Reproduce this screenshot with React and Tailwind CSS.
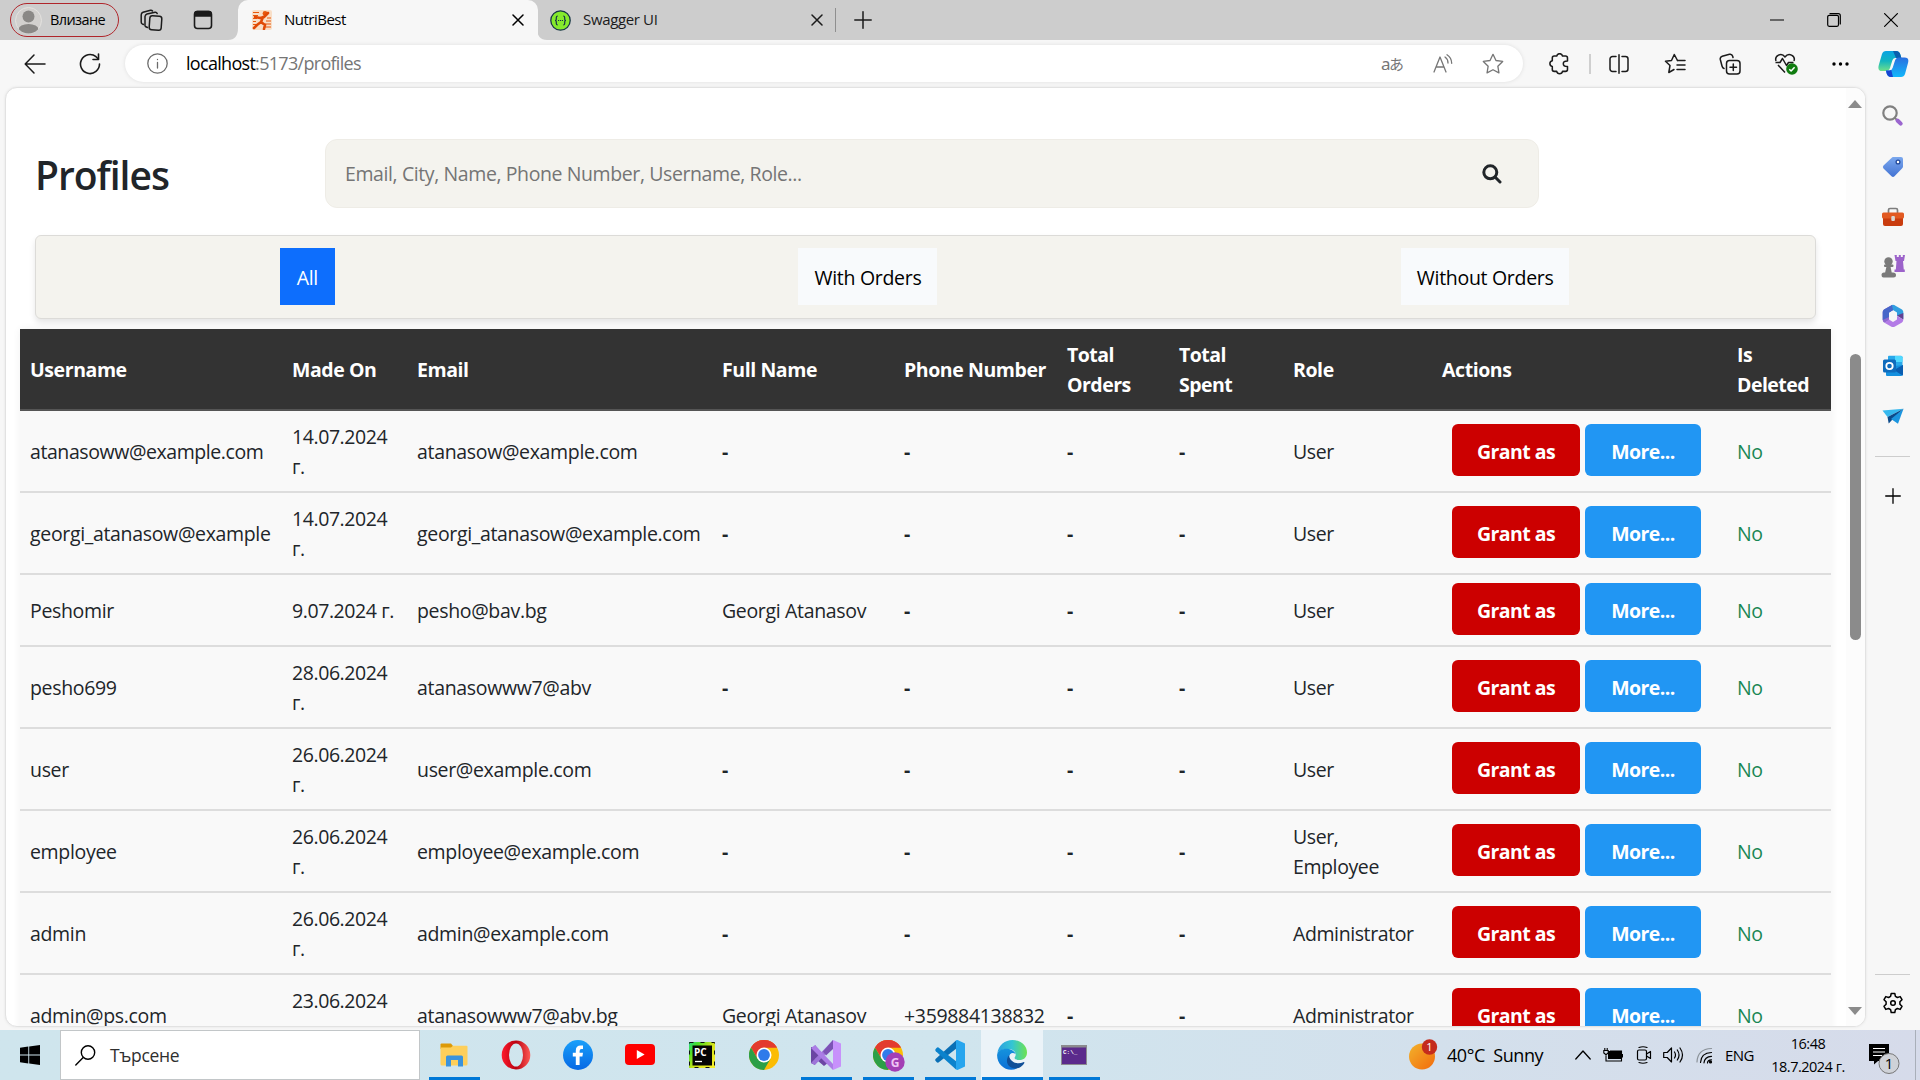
import React from 'react';

const S = ({ size = 24, w, h, vb = '0 0 24 24', sw = 1.5, children, className = '' }) => (
  <svg
    width={w || size}
    height={h || size}
    viewBox={vb}
    fill="none"
    stroke="currentColor"
    strokeWidth={sw}
    strokeLinecap="round"
    strokeLinejoin="round"
    className={`shrink-0 ${className}`}
  >
    {children}
  </svg>
);

const Slot = ({ className, children }) => (
  <div className={`flex shrink-0 items-center justify-center ${className}`}>{children}</div>
);

const CloseX = () => (
  <S size={12} vb="0 0 12 12" sw={1.5}>
    <path d="M1 1l10 10M11 1L1 11" />
  </S>
);

const STAR = 'M10 1.2l2.7 5.6 6.1.9-4.4 4.3 1 6.1-5.4-2.9-5.4 2.9 1-6.1L1.2 7.700l6.100-.9z';

function TabBar() {
  return (
    <div className="flex h-10 shrink-0 items-stretch bg-[#cdcdcd] text-[15px] tracking-[-0.35px] text-[#1b1b1b]">
      <div className="my-[3px] ml-[10px] flex w-[109px] shrink-0 items-center rounded-full border-[1.5px] border-[#b0262b] pl-1">
        <svg width="27" height="27" viewBox="0 0 27 27" className="shrink-0">
          <defs>
            <clipPath id="avatarClip"><circle cx="13.500" cy="13.500" r="13" /></clipPath>
          </defs>
          <circle cx="13.500" cy="13.500" r="13" fill="#d2d0ce" stroke="#e4e2df" />
          <g clipPath="url(#avatarClip)" fill="#8a8886">
            <circle cx="13.500" cy="9.500" r="6" />
            <ellipse cx="13.500" cy="22.500" rx="10" ry="5.500" />
          </g>
        </svg>
        <span className="ml-[8px] text-[14.500px] tracking-[-0.6px] text-black">Влизане</span>
      </div>
      <Slot className="ml-[20px] w-6">
        <S size={23} vb="0 0 23 23" sw={1.500}>
          <rect x="9.500" y="7" width="12" height="14" rx="2.500" transform="rotate(4 15 14)" />
          <path d="M7.500 18.500L5.800 17.800A2 2 0 0 1 5 15.500V7.500A3 3 0 0 1 7 5L15 3.200A2 2 0 0 1 17.200 4.500" />
          <path d="M3.500 15.500L2.200 14.800A2 2 0 0 1 1.200 13V6A3 3 0 0 1 3 3.200L10.500 1.200A2 2 0 0 1 12.500 2" />
        </S>
      </Slot>
      <Slot className="ml-[28px] w-6">
        <S size={20} vb="0 0 20 20" sw={1.600}>
          <rect x="1.500" y="1.500" width="17" height="17" rx="3" />
          <path d="M2 3.500q0-2 2-2h12q2 0 2 2V6H2z" fill="currentColor" />
        </S>
      </Slot>
      <svg width="12" height="40" viewBox="0 0 12 40" className="ml-[13px] shrink-0">
        <path d="M0 40Q10 40 10 28V10L12 8V40z" fill="#f7f7f7" />
      </svg>
      <div className="-ml-[2px] flex w-[300px] shrink-0 items-center rounded-t-[10px] bg-[#f7f7f7] text-black">
        <svg width="20" height="20" viewBox="0 0 20 20" className="ml-[14px] shrink-0">
          <rect width="20" height="20" rx="2" fill="#f8dfc8" />
          <g stroke="#e8590c" strokeWidth="1.100">
            <path d="M1 2.500h6M1 5.500h5M1 8.500h4M1 11.500h3M1 14.500h5M13 14h6M14 11h5M15 8h4M12 17h7" />
          </g>
          <circle cx="13" cy="3.500" r="2.400" fill="#e8590c" />
          <path d="M3 7l5 1 4-1 4-4M11 7l-2 5 4 3-1 4M9 12l-4 3-3 3" stroke="#e04a06" strokeWidth="2.600" fill="none" strokeLinecap="round" />
        </svg>
        <span className="-mt-px ml-[12px] tracking-[-0.5px]">NutriBest</span>
        <div className="ml-auto mr-[14px]"><CloseX /></div>
      </div>
      <svg width="10" height="40" viewBox="0 0 10 40" className="-ml-px shrink-0">
        <path d="M0 28V40H10Q0 40 0 28z" fill="#f7f7f7" />
      </svg>
      <div className="flex w-[288px] shrink-0 items-center pl-[3px]">
        <svg width="21" height="21" viewBox="0 0 21 21" className="shrink-0">
          <circle cx="10.500" cy="10.500" r="9.700" fill="#85ea2d" stroke="#173647" strokeWidth="1.300" />
          <g fill="none" stroke="#173647" strokeWidth="1.200">
            <path d="M7.800 6Q6.300 6 6.300 7.500V9.200Q6.300 10.500 5 10.500Q6.300 10.500 6.300 11.800V13.500Q6.300 15 7.800 15" />
            <path d="M13.200 6Q14.700 6 14.700 7.500V9.200Q14.700 10.500 16 10.500Q14.700 10.500 14.700 11.800V13.500Q14.700 15 13.200 15" />
            <path d="M8 10.500h5" strokeDasharray="1.200 .8" />
          </g>
        </svg>
        <span className="-mt-px ml-[12px]">Swagger UI</span>
        <div className="ml-auto mr-[12px]"><CloseX /></div>
      </div>
      <div className="my-2 w-px shrink-0 bg-[#8f8f8f]" />
      <Slot className="ml-[17px] w-5">
        <S size={18} vb="0 0 18 18"><path d="M9 .8v16.400M.8 9h16.400" /></S>
      </Slot>
      <div className="mr-[1px] ml-auto flex text-black">
        <Slot className="w-[57px]"><S size={14} vb="0 0 14 14" sw={1.200}><path d="M.5 7h13" /></S></Slot>
        <Slot className="w-[57px]">
          <S size={14} vb="0 0 14 14" sw={1.200}>
            <rect x=".7" y="2.300" width="10.800" height="11" rx="1.500" />
            <path d="M3 .7h8.300a2 2 0 0 1 2 2V11" />
          </S>
        </Slot>
        <Slot className="w-[57px]"><S size={14} vb="0 0 14 14" sw={1.200}><path d="M.6.6l12.800 12.800M13.400.6L.6 13.400" /></S></Slot>
      </div>
    </div>
  );
}

function Toolbar() {
  return (
    <div className="flex h-[47px] shrink-0 items-center bg-[#f7f7f7] text-[#1b1b1b]">
      <Slot className="ml-[23px] w-6">
        <S size={22} vb="0 0 22 22" sw={1.500}><path d="M21 11H1.500M10 2L1.200 11l8.800 9" /></S>
      </Slot>
      <Slot className="ml-[31px] w-6">
        <S size={22} vb="0 0 22 22" sw={1.600}>
          <path d="M20.500 11a9.500 9.500 0 1 1-3.500-7.300L19.300 6" />
          <path d="M19.500 1v5.500h-5.500" />
        </S>
      </Slot>
      <div className="ml-[23px] flex h-[37px] w-[1398px] shrink-0 items-center rounded-full bg-white shadow-[0_0_4px_rgba(0,0,0,0.1)]">
        <S size={21} vb="0 0 21 21" sw={1.300} className="ml-[22px] text-[#6b6b6b]">
          <circle cx="10.500" cy="10.500" r="9.700" />
          <path d="M10.500 9.500v5.500M10.500 6.300v.2" />
        </S>
        <span className="-mt-px ml-[18px] text-[18px] tracking-[-0.7px] text-[#757575]">
          <span className="text-black">localhost</span>:5173/profiles
        </span>
        <span className="ml-auto w-[24px] font-['Noto_Sans','Noto_Sans_CJK_JP',sans-serif] text-[17px] leading-none tracking-[-1.5px] whitespace-nowrap text-[#767676]">
          a<span className="text-[15px]">あ</span>
        </span>
        <Slot className="ml-[28px] w-5 text-[#767676]">
          <S size={20} vb="0 0 20 20" sw={1.300}>
            <path d="M1 18L7 3l6 15M3 13h8" />
            <path d="M12 3q3 2 3 6M14 .8q4.500 2.800 4.700 8.500" />
          </S>
        </Slot>
        <Slot className="ml-[30px] mr-[20px] w-5 text-[#767676]">
          <S size={22} vb="0 0 20 20" sw={1.200}><path d={STAR} /></S>
        </Slot>
      </div>
      <Slot className="ml-[26px] w-[22px]">
        <S size={22} vb="1 1 20 20" sw={1.400}>
          <path d="M4 5.500q0-1.700 1.700-1.700H8A2.700 2.700 0 0 1 13.300 3.800H16q1.800 0 1.800 1.700V8.300Q14 8.200 14 10.700T17.800 13.300V16q0 1.700-1.800 1.700h-2.700A2.700 2.700 0 0 1 8 17.700H5.700Q4 17.700 4 16V13.300A2.700 2.700 0 0 1 4 8z" />
        </S>
      </Slot>
      <div className="ml-[18px] h-5 w-[2px] shrink-0 bg-[#cfcfcf]" />
      <Slot className="ml-[17px] w-[22px]">
        <S size={20} vb="0 0 20 20" sw={1.500}>
          <path d="M7 2.500H3.500a2.500 2.500 0 0 0-2.500 2.500v10a2.500 2.500 0 0 0 2.500 2.500H7M13 2.500h3.500A2.500 2.500 0 0 1 19 5v10a2.500 2.500 0 0 1-2.500 2.500H13M10 .8v18.400" />
        </S>
      </Slot>
      <Slot className="ml-[34px] w-[22px]">
        <S size={22} vb="0 0 22 22" sw={1.500}>
          <path d="M13.500 7.500L10.300 1.500 7.500 7.500 1.500 8.300l4.500 4.200-1.200 7 5.200-3" />
          <path d="M13.500 7.500H21M13 12h8M13 16.500h8" />
        </S>
      </Slot>
      <Slot className="ml-[33px] w-[22px]">
        <S size={22} vb="0 0 22 22" sw={1.500}>
          <rect x="7.500" y="7.500" width="13.500" height="13.500" rx="3" />
          <path d="M14.300 11v6.500M11 14.300h6.500M5 15.500Q3.500 15 3 13L1.300 6.500Q.8 4 3.200 3.300L10.500 1.300Q13 .8 13.700 3.300L14 4.500" />
        </S>
      </Slot>
      <Slot className="ml-[33px] w-6">
        <svg width="24" height="22" viewBox="0 0 24 22" fill="none" stroke="#1b1b1b" strokeWidth="1.500" strokeLinejoin="round">
          <path d="M2 8C.2 2.500 7.500-1 11 4c3.500-5 10.800-1.500 9 4M4 12l7 7.500M1.500 9.500H6l2.500-4 4 7 2-3h5" />
          <circle cx="18" cy="16" r="5.800" fill="#107c10" stroke="none" />
          <path d="M15.300 16.200l1.800 1.800 3.500-3.800" stroke="#fff" />
        </svg>
      </Slot>
      <Slot className="ml-[31px] w-[22px]">
        <svg width="17" height="4" viewBox="0 0 17 4"><circle cx="2" cy="2" r="1.700" /><circle cx="8.500" cy="2" r="1.700" /><circle cx="15" cy="2" r="1.700" /></svg>
      </Slot>
      <Slot className="ml-[26px] w-8">
        <svg width="31" height="28" viewBox="0 0 31 28">
          <defs>
            <linearGradient id="cpA" x1="0" y1="0" x2="0" y2="1"><stop offset="0" stopColor="#0aa3e3" /><stop offset=".5" stopColor="#12b5c0" /><stop offset="1" stopColor="#6fe08a" /></linearGradient>
            <linearGradient id="cpB" x1="0" y1="0" x2="0" y2="1"><stop offset="0" stopColor="#2a6fe0" /><stop offset="1" stopColor="#12b8fb" /></linearGradient>
          </defs>
          <path d="M8 1h10q3.500 0 4.500 4l.8 3H17q-2 0-2.700 2.500L12 18q-.8 3-4 3H4Q-.8 21 .8 15L4 4Q5 1 8 1z" fill="url(#cpA)" />
          <path d="M15 1h3q3.500 0 4.500 4l.8 3H18z" fill="#0b5fae" />
          <path d="M23 27H13q-3.500 0-4.500-4L8 20.500h3.500q2.500 0 3.200-2.700L17 10.500Q18 7.500 21 7.500h5.500Q31.500 7.500 30 13l-3 11q-1 3-4 3z" fill="url(#cpB)" />
          <path d="M15 27h-2q-3.500 0-4.500-4L8 20.500h3.500q1 0 1.700-.7z" fill="#1746d1" />
        </svg>
      </Slot>
    </div>
  );
}

const rows = [
  ['atanasoww@example.com', '14.07.2024 г.', 'atanasow@example.com', '-', '-', 'User'],
  ['georgi_atanasow@example', '14.07.2024 г.', 'georgi_atanasow@example.com', '-', '-', 'User'],
  ['Peshomir', '9.07.2024 г.', 'pesho@bav.bg', 'Georgi Atanasov', '-', 'User'],
  ['pesho699', '28.06.2024 г.', 'atanasowww7@abv', '-', '-', 'User'],
  ['user', '26.06.2024 г.', 'user@example.com', '-', '-', 'User'],
  ['employee', '26.06.2024 г.', 'employee@example.com', '-', '-', 'User, Employee'],
  ['admin', '26.06.2024 г.', 'admin@example.com', '-', '-', 'Administrator'],
  ['admin@ps.com', '23.06.2024 г.', 'atanasowww7@abv.bg', 'Georgi Atanasov', '+359884138832', 'Administrator'],
];

const heads = ['Username', 'Made On', 'Email', 'Full Name', 'Phone Number', 'Total Orders', 'Total Spent', 'Role', 'Actions', 'Is Deleted'];

const cell = 'pt-[12px] pb-[10px] pl-[10px] align-middle whitespace-nowrap';

const Val = ({ v }) => (v === '-' ? <span className="font-bold">-</span> : v);

function ProfilesTable() {
  return (
    <table className="mt-[10px] ml-[14px] w-[1811px] table-fixed border-collapse text-[19.500px] leading-[30px] tracking-[-0.33px] text-[#212529] shadow-[0_0_8px_rgba(0,0,0,0.06)]">
      <colgroup>
        <col className="w-[262px]" />
        <col className="w-[125px]" />
        <col className="w-[305px]" />
        <col className="w-[182px]" />
        <col className="w-[163px]" />
        <col className="w-[112px]" />
        <col className="w-[114px]" />
        <col className="w-[149px]" />
        <col className="w-[295px]" />
        <col className="w-[104px]" />
      </colgroup>
      <thead>
        <tr className="h-[81px] border-b-2 border-[#555] bg-[#333] text-left text-white">
          {heads.map((h) => (
            <th key={h} className={`pt-[11px] pb-[9px] pl-[10px] align-middle font-bold ${/^(Total|Is)/.test(h) ? 'pr-8 tracking-[-0.52px]' : 'tracking-[-0.42px] whitespace-nowrap'}`}>{h}</th>
          ))}
        </tr>
      </thead>
      <tbody>
        {rows.map((r, i) => (
          <tr key={i} className={`border-b-2 border-[#ddd] bg-[#f9f9f9] ${i === 2 ? 'h-[72px]' : 'h-[82px]'}`}>
            <td className={`${cell} ${i === 0 ? 'tracking-[-0.42px]' : ''}`}>{r[0]}</td>
            <td className={`pt-[2px] pb-0 pl-[10px] align-middle tracking-[-0.42px] ${i === 2 ? 'whitespace-nowrap' : 'pr-4'}`}>{r[1]}</td>
            <td className={cell}>{r[2]}</td>
            <td className={cell}><Val v={r[3]} /></td>
            <td className={cell}><Val v={r[4]} /></td>
            <td className={cell}><Val v="-" /></td>
            <td className={cell}><Val v="-" /></td>
            <td className="pt-[2px] pr-8 pb-0 pl-[10px] align-middle tracking-[-0.4px]">{r[5]}</td>
            <td className="py-0 pl-[20px] align-middle">
              <div className="-mt-[3px] flex gap-[5px] font-bold tracking-[-0.55px] text-white">
                <button className="h-[52px] w-[128px] rounded-[6px] bg-[#c00] pt-[5px]">Grant as</button>
                <button className="h-[52px] w-[116px] rounded-[6px] bg-[#2196f3] pt-[5px]">More...</button>
              </div>
            </td>
            <td className={`${cell} text-[#198754]`}>No</td>
          </tr>
        ))}
      </tbody>
    </table>
  );
}

function Page() {
  return (
    <div className="ml-[5px] flex h-[940px] w-[1861px] shrink-0 overflow-hidden rounded-[12px] border border-[#e2e2e2] bg-white shadow-[0_0_3px_rgba(0,0,0,0.08)]">
      <div className="w-[1840px] shrink-0">
        <div className="flex pt-[51px] pl-[29px]">
          <h1 className="mt-[8px] w-[290px] text-[39px] leading-[56px] font-semibold tracking-[-1px] text-[#212529]">Profiles</h1>
          <div className="flex h-[69px] w-[1214px] items-center rounded-[12px] border border-[#eeece6] bg-[#f4f3ee] pl-[19px]">
            <span className="text-[19.500px] tracking-[-0.4px] text-[#757575]">Email, City, Name, Phone Number, Username, Role...</span>
            <S size={20} vb="0 0 20 20" sw={3} className="mr-[36px] ml-auto text-[#212529]">
              <circle cx="8.300" cy="8.300" r="6.500" />
              <path d="M13.300 13.300l4.700 4.700" />
            </S>
          </div>
        </div>
        <div className="mt-[27px] ml-[29px] flex h-[84px] w-[1781px] items-start justify-around rounded-[6px] border border-[#dcdbd8] bg-[#f4f3ee] pt-3 pr-[14px] pl-[12px] text-[19.500px] tracking-[-0.3px] text-black shadow-[0_4px_6px_rgba(0,0,0,0.1)]">
          <button className="h-[57px] w-[55px] bg-[#0d6efd] pt-[3px] text-white">All</button>
          <button className="h-[57px] w-[139px] bg-[#f8fafc] pt-[3px] whitespace-nowrap">With Orders</button>
          <button className="h-[57px] w-[168px] bg-[#f8fafc] pt-[3px] whitespace-nowrap">Without Orders</button>
        </div>
        <ProfilesTable />
      </div>
      <div className="flex w-[19px] shrink-0 flex-col items-center bg-[#fcfcfc] pr-[1px]">
        <svg width="14" height="8" viewBox="0 0 14 8" className="mt-[12px] shrink-0"><path d="M0 8L7 0l7 8z" fill="#8b8b8b" /></svg>
        <div className="mt-[246px] h-[286px] w-[11px] shrink-0 rounded-full bg-[#8b8b8b]" />
        <svg width="14" height="8" viewBox="0 0 14 8" className="mt-auto mb-[11px] shrink-0"><path d="M0 0h14L7 8z" fill="#8b8b8b" /></svg>
      </div>
    </div>
  );
}

function Sidebar() {
  return (
    <div className="flex flex-1 flex-col items-center pt-[3px] pr-[1px]">
      <Slot className="h-[51px]">
        <svg width="22" height="22" viewBox="0 0 22 22" fill="none" strokeLinecap="round">
          <circle cx="8" cy="8" r="6.700" stroke="#808080" strokeWidth="2.200" />
          <path d="M12.800 12.800l2.700 2.700" stroke="#808080" strokeWidth="1.800" />
          <path d="M15.500 15.500l3.200 3.200" stroke="#9b66cf" strokeWidth="4" />
        </svg>
      </Slot>
      <Slot className="h-[51px]">
        <svg width="22" height="22" viewBox="0 0 22 22">
          <defs><linearGradient id="tagG" x1="0" y1="0" x2="0" y2="1"><stop offset="0" stopColor="#7ba8ee" /><stop offset="1" stopColor="#4373d3" /></linearGradient></defs>
          <path d="M11 1h8q2 0 2 2v7.500q0 1-1 2l-7.500 7.800q-1.500 1.400-3 0l-8-7.700q-1.300-1.500 0-3L9.500 2q.8-1 1.500-1z" fill="url(#tagG)" />
          <circle cx="16" cy="6" r="1.900" fill="#fff" stroke="#234a9b" strokeWidth="1.300" />
        </svg>
      </Slot>
      <Slot className="h-[50px]">
        <svg width="24" height="20" viewBox="0 0 24 20">
          <path d="M7.500 6V3q0-1.500 1.500-1.500h6q1.500 0 1.500 1.500v3" fill="none" stroke="#7d7d7d" strokeWidth="1.700" />
          <path d="M2 11h20v6q0 2-2 2H4q-2 0-2-2z" fill="#c93c0e" />
          <rect x="1" y="5.500" width="22" height="6" rx="1.500" fill="#e25a22" />
          <rect x="10.300" y="9" width="3.600" height="5" rx="1" fill="#d9d6d3" />
        </svg>
      </Slot>
      <Slot className="h-[48px]">
        <svg width="24" height="24" viewBox="0 0 24 24">
          <g fill="#9c63ca"><path d="M13.500 1h2.300v2h2V1h2v2h2V1H24l-1 6h-8.500zM15.500 7h6.500l.8 9h-8zM13.500 15.500h10.300v2.500H13.500z" /></g>
          <g fill="#7a7a7a"><circle cx="7.500" cy="7.500" r="4.200" /><rect x="3" y="10.500" width="9.500" height="2.500" rx="1" /><path d="M5.500 12.500h4l1.300 6.500H4zM3 18.500h9q3 0 3 2.500t-2.500 2.500h-10Q.5 23.500.5 21T3 18.500z" /></g>
        </svg>
      </Slot>
      <Slot className="h-[51px]">
        <svg width="22" height="24" viewBox="0 0 22 24">
          <path d="M10 1L2 5.500Q.7 6.500.7 8v8q0 2 1.800 2.700L7 16.500V8.500L13 5V2q-1.300-1.500-3-1z" fill="#8f68cf" />
          <path d="M10 1q1.500-.5 3 .5L20 5.500q1.300 1 1.300 2.500v7L15 11.500V8.500l-4-2.500-4 2.500V4z" fill="#319fe0" />
          <path d="M10 1L2 5.500Q.7 6.500.7 8v8l6.300-3V8.500L11 6z" fill="#4766c9" />
          <path d="M2.500 18.700L9 22.500q2 1 4 0l7-4q1.300-1 1.300-3L15 12v3.500L11 18l-4-2.500z" fill="#b37be6" />
          <path d="M15 11.500l6.300 4V9z" fill="#634191" />
        </svg>
      </Slot>
      <Slot className="h-[50px]">
        <svg width="22" height="22" viewBox="0 0 22 22">
          <path d="M6 1.500Q6 .8 7 .8h12q1.500 0 1.500 1.500V11H6z" fill="#28a8ea" />
          <path d="M13 1h6.500q1 0 1 1.500V7H13z" fill="#50d9ff" />
          <path d="M4 20V12l17-2v9q0 2-2 2H5q-1 0-1-1z" fill="#1490df" />
          <path d="M21 10v9q0 1-.5 1.500L12 15z" fill="#0a5db0" />
          <rect x="1" y="4.500" width="13" height="13" rx="1.500" fill="#0f6cbd" />
          <circle cx="7.500" cy="11" r="3.200" fill="none" stroke="#fff" strokeWidth="1.800" />
        </svg>
      </Slot>
      <Slot className="h-[50px]">
        <svg width="22" height="17" viewBox="0 0 22 17">
          <path d="M.5 2.500L21.500.7 5.500 9z" fill="#35b8ee" />
          <path d="M21.500.7L5.500 9l1.200 6.500L10 12z" fill="#0c4a8a" />
          <path d="M21.500.7L9 11l7 4.800z" fill="#1b95df" />
        </svg>
      </Slot>
      <div className="mt-[15px] h-px w-[35px] bg-[#cdcdcd]" />
      <Slot className="mt-[31px] h-4"><S size={16} vb="0 0 16 16" sw={1.300}><path d="M8 .7v14.600M.7 8h14.600" /></S></Slot>
      <div className="mt-auto h-px w-[35px] bg-[#cdcdcd]" />
      <Slot className="mt-[17px] mb-[16px]">
        <S size={22} vb="0 0 22 22" sw={1.500}>
          <path d="M9.200 1.500h3.600l.6 2.800 2 1.200 2.800-.9 1.800 3.100-2.100 2v2.600l2.100 2-1.800 3.100-2.800-.9-2 1.200-.6 2.800H9.200l-.6-2.800-2-1.200-2.800.9L2 14.300l2.100-2V9.700L2 7.700l1.800-3.100 2.800.9 2-1.200z" />
          <circle cx="11" cy="11" r="2.300" />
        </S>
      </Slot>
    </div>
  );
}

const Chrome = ({ badge }) => (
  <svg width="32" height="34" viewBox="0 0 32 34">
    <circle cx="15" cy="17" r="15" fill="#fbbc05" />
    <path d="M15 17L2 9.500A15 15 0 0 1 28 9.500H15z" fill="#e33b2e" />
    <path d="M15 9.500h13A15 15 0 0 0 2 9.500l6.500 11z" fill="#e33b2e" />
    <path d="M2 9.500A15 15 0 0 0 15 32l6.500-11.300-13 0z" fill="#2c9f47" />
    <circle cx="15" cy="17" r="7.500" fill="#fff" />
    <circle cx="15" cy="17" r="5.900" fill="#2f7bea" />
    {badge && (
      <>
        <circle cx="22" cy="24" r="9.700" fill="#a33fb5" />
        <text x="22" y="28.500" textAnchor="middle" fontSize="12" fontWeight="700" fill="#efc5f5" fontFamily="Open Sans">G</text>
      </>
    )}
  </svg>
);

const taskIcons = [
  {
    bar: 'w-[51px]',
    icon: (
      <svg width="28" height="24" viewBox="0 0 28 24">
        <path d="M.5 1.500Q.5.5 1.500.5H11l2 2.500v3H.5z" fill="#dd9a08" />
        <path d="M.5 4.500H11l2-1.700h13.500q1 0 1 1V21q0 1.500-1.500 1.500H2Q.5 22.500.5 21z" fill="#fdcf5b" />
        <path d="M6 23.500V14q0-1.500 1.500-1.500h14q1.500 0 1.500 1.500v9.500h-5V17h-7v6.500z" fill="#3a93dc" />
      </svg>
    ),
  },
  {
    icon: (
      <svg width="30" height="30" viewBox="0 0 30 30">
        <defs><linearGradient id="opG" x1="0" y1="0" x2="1" y2="0"><stop offset="0" stopColor="#ff1b2d" /><stop offset=".5" stopColor="#b8000f" /><stop offset="1" stopColor="#ff5a56" /></linearGradient></defs>
        <path fillRule="evenodd" d="M15 .5a14.300 14.500 0 1 0 0 29a14.300 14.500 0 1 0 0-29zM15 3.500a7 11.500 0 1 1 0 23a7 11.500 0 1 1 0-23z" fill="url(#opG)" />
      </svg>
    ),
  },
  {
    icon: (
      <svg width="30" height="30" viewBox="0 0 30 30">
        <defs><linearGradient id="fbG" x1="0" y1="0" x2="0" y2="1"><stop offset="0" stopColor="#19a0fa" /><stop offset="1" stopColor="#0668e4" /></linearGradient></defs>
        <circle cx="15" cy="15" r="15" fill="url(#fbG)" />
        <path d="M12.800 25V16.500h-3v-3.700h3V10.500q0-5 5-5h2.200v3.600h-1.500q-1.900 0-1.900 1.900v1.800h3.400l-.6 3.700h-2.800V25z" fill="#fff" />
      </svg>
    ),
  },
  {
    icon: (
      <svg width="30" height="21" viewBox="0 0 30 21">
        <rect width="30" height="21" rx="4" fill="#f00" />
        <path d="M11.800 6v9l7.800-4.500z" fill="#fff" />
      </svg>
    ),
  },
  {
    icon: (
      <svg width="26" height="26" viewBox="0 0 26 26">
        <defs><linearGradient id="pcG" x1="0" y1="0" x2="1" y2=".8"><stop offset="0" stopColor="#21d789" /><stop offset=".25" stopColor="#4ee023" /><stop offset=".6" stopColor="#d3e51c" /><stop offset="1" stopColor="#f4ee2a" /></linearGradient></defs>
        <rect width="26" height="26" fill="url(#pcG)" />
        <rect x=".5" y=".5" width="25" height="25" fill="none" stroke="#111" strokeDasharray="4 7" />
        <rect x="3.500" y="3.500" width="19.500" height="20" fill="#050505" />
        <text x="5" y="13.500" fontSize="10" fontWeight="700" fill="#fff" fontFamily="Open Sans">PC</text>
        <path d="M6 19.500h7" stroke="#fff" strokeWidth="1.300" />
      </svg>
    ),
  },
  { icon: <div className="ml-[2px]"><Chrome /></div> },
  {
    bar: 'w-[51px]',
    icon: (
      <svg width="30" height="30" viewBox="0 0 30 30">
        <path d="M0 7l4-2 14 17-5 4L4 18.500v-11zM0 7v16l4 2V5z" fill="#6b46a3" />
        <path d="M0 23l4 2L22 6V0L12.500 10z" fill="#9d74d8" />
        <path d="M4 5l18 19v6L0 8z" fill="#ab7de6" />
        <path d="M12 11.500L22 0v9l-7 6.500z" fill="#7c53b5" />
        <path d="M22 0l8 3.500v23L22 30z" fill="#c791fb" />
      </svg>
    ),
  },
  { bar: 'w-[51px]', icon: <div className="ml-[2px]"><Chrome badge /></div> },
  {
    bar: 'w-[51px]',
    icon: (
      <svg width="30" height="30" viewBox="0 0 30 30">
        <path d="M22 8L3.500 22.500Q2.500 23 1.500 22L.5 20.800q-.7-1 .3-2L21 .5z" fill="#0a6fb5" />
        <path d="M22 22L3.500 7.500Q2.500 7 1.500 8L.5 9.200q-.7 1 .3 2L21 29.500z" fill="#0b82cc" />
        <path d="M21 .3L22.500 0 30 3.500v23L22.500 30 21 29.500z" fill="#26a5ee" />
      </svg>
    ),
  },
  {
    bar: 'w-[61px]',
    active: true,
    icon: (
      <svg width="30" height="30" viewBox="0 0 30 30">
        <defs>
          <linearGradient id="edA" x1="0" y1="0" x2="1" y2="0"><stop offset="0" stopColor="#2a9fe0" /><stop offset=".5" stopColor="#34c5d4" /><stop offset="1" stopColor="#6de34f" /></linearGradient>
          <linearGradient id="edB" x1="0" y1="0" x2="0" y2="1"><stop offset="0" stopColor="#1593dd" /><stop offset="1" stopColor="#0b6fd6" /></linearGradient>
        </defs>
        <path d="M.3 13.500C1.500 5 8 0 15.500 0 24 0 30 6 30 12.500c0 5-3.500 7.500-7.500 7.500-3 0-5-1-5-2 0-.8 1.200-1.500 1.200-3.500 0-3-3-5.500-7.200-5.500C6 9 1.500 10.500.3 13.500z" fill="url(#edA)" />
        <path d="M.1 15C.5 10.500 5.500 8.500 10.500 8.800c4.500.3 7.500 3 8 5.200-3-2.500-6.500-.5-6.500 4 0 5 4 9.500 8 10.500C10 33 0 25 .1 15z" fill="url(#edB)" />
        <path d="M12 15.500c-4 4-2.500 13 7 13 3.500 0 7-3 8.300-5.500.4-.9-.3-1.200-1-.8-6 2.800-13.300 0-14.300-6.700z" fill="#104f98" />
      </svg>
    ),
  },
  {
    bar: 'w-[51px]',
    icon: (
      <svg width="26" height="20" viewBox="0 0 26 20">
        <rect width="26" height="20" fill="#8b8b8f" />
        <rect x="1" y="2.500" width="24" height="16.500" fill="#5b2a8c" />
        <text x="2" y="9" fontSize="6" fontWeight="700" fill="#fff" fontFamily="Liberation Mono">C:\_</text>
      </svg>
    ),
  },
];

function Taskbar() {
  return (
    <div className="flex h-[50px] shrink-0 bg-linear-to-r from-[#cfe5ed] via-[#d0e5ee] to-[#d6dbea] text-black">
      <Slot className="w-[60px]">
        <svg width="20" height="20" viewBox="0 0 20 20"><path d="M0 2.800L8.300 1.600v8H0zM9.200 1.500L20 0v9.600H9.200zM0 10.500h8.300v8L0 17.300zM9.200 10.500H20V20L9.200 18.500z" /></svg>
      </Slot>
      <div className="flex w-[360px] shrink-0 items-center border border-[#c2c6c8] bg-white pl-[14px]">
        <S size={21} vb="0 0 21 21" sw={1.400}><circle cx="13" cy="7.500" r="6.700" /><path d="M8.200 12.500L.8 20" /></S>
        <span className="ml-[14px] text-[17.500px] tracking-[-0.3px] text-[#2f2f2f]">Търсене</span>
      </div>
      <div className="ml-[3px] flex">
        {taskIcons.map((t, i) => (
          <div key={i} className={`flex w-[62px] flex-col items-center ${t.active ? 'bg-[#ebf3f8]' : ''}`}>
            <div className="flex h-[47px] items-center justify-center pt-[2px]">{t.icon}</div>
            {t.bar && <div className={`h-[3px] bg-[#0078d7] ${t.bar}`} />}
          </div>
        ))}
      </div>
      <div className="ml-auto flex items-center">
        <svg width="30" height="34" viewBox="0 0 30 34" className="-mt-[1px]">
          <defs><linearGradient id="sunG" x1="0" y1="0" x2="1" y2="1"><stop offset="0" stopColor="#f2b32c" /><stop offset="1" stopColor="#f26a0c" /></linearGradient></defs>
          <circle cx="13" cy="18.500" r="13" fill="url(#sunG)" />
          <circle cx="20.500" cy="9" r="7.700" fill="#c42b1c" />
          <text x="20.500" y="13" textAnchor="middle" fontSize="11" fill="#fff" fontFamily="Open Sans">1</text>
        </svg>
        <span className="ml-[8px] w-[97px] text-[18px] tracking-[-0.45px] whitespace-pre">40°C  Sunny</span>
        <Slot className="ml-[31px] w-4"><S size={16} vb="0 0 16 16" sw={1.300}><path d="M.8 12L8 4l7.200 8" /></S></Slot>
        <Slot className="ml-[12px] w-5">
          <svg width="20" height="14" viewBox="0 0 20 14">
            <path d="M5 3h13.500v8H5z" />
            <path d="M3 6.500V13h15.500V3H7M19.500 6v3.500M.8 2.500h4.400V5L3 6.800.8 5zM1.800 0v2M4.200 0v2" fill="none" stroke="#000" strokeWidth="1.100" />
          </svg>
        </Slot>
        <Slot className="ml-[13px] w-4">
          <S size={18} vb="0 0 18 18" sw={1.200}><rect x="2.500" y="4" width="9" height="10" rx="1.500" /><path d="M11.500 8l4-2.500v7l-4-2.500M4 1.500q4-1.500 8 0M4 16.500q4 1.500 8 0" /></S>
        </Slot>
        <Slot className="ml-[11px] w-[21px]">
          <S w={21} h={18} vb="0 0 21 18" sw={1.200}><path d="M.7 6.500h3.500L8.500 2v14l-4.300-4.500H.7zM11.500 6q2 3 0 6M14.300 4q3.500 5 0 10M17 2q5 7 0 14" /></S>
        </Slot>
        <Slot className="ml-[12px] w-4">
          <S size={17} vb="0 0 17 17" sw={1.200}>
            <path d="M1 15Q1.500 2 15.500 1.500" stroke="#8b9299" />
            <path d="M4.500 15.500Q5 6 15.500 5.500M8 15.800Q8.500 9.700 15.500 9.300M11.500 16q0-3 4-3.200" />
            <circle cx="14.500" cy="15" r="1" fill="#000" />
          </S>
        </Slot>
        <span className="ml-[13px] w-[31px] text-[15px] tracking-[-0.6px]">ENG</span>
        <div className="ml-[14px] w-[76px] text-center text-[14.500px] leading-[23px] tracking-[-0.5px] whitespace-nowrap">
          <div>16:48</div>
          <div>18.7.2024 г.</div>
        </div>
        <Slot className="ml-[23px] w-[31px]">
          <svg width="31" height="32" viewBox="0 0 31 32" className="mt-[5px]">
            <path d="M0 2h20v17H9l-4 3.500V19H0z" />
            <path d="M4 6.500h12M4 10h12M4 13.500h9" stroke="#fff" strokeWidth="1.200" />
            <circle cx="20" cy="21.500" r="10" fill="#cfd2d8" stroke="#777" />
            <text x="20" y="27" textAnchor="middle" fontSize="15" fontFamily="Open Sans">1</text>
          </svg>
        </Slot>
        <div className="ml-[15px] h-[50px] w-px bg-[#a9afb9]" />
        <div className="w-[4px]" />
      </div>
    </div>
  );
}

export default function App() {
  return (
    <div className="flex h-[1080px] w-[1920px] flex-col overflow-hidden bg-[#f7f7f7] font-['Open_Sans','Noto_Sans',sans-serif]">
      <TabBar />
      <Toolbar />
      <div className="flex h-[943px] shrink-0">
        <Page />
        <Sidebar />
      </div>
      <Taskbar />
    </div>
  );
}
